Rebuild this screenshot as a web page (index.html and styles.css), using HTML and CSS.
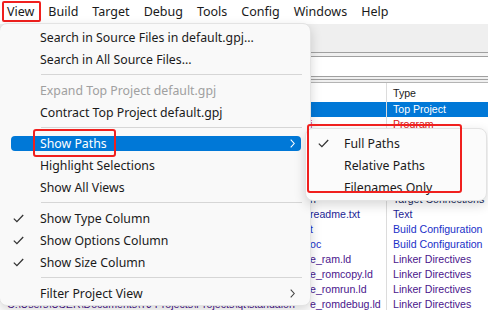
FILE: index.html
```html
<!DOCTYPE html>
<html lang="en">
<head>
    <meta charset="UTF-8">
    <title>MULTI Project Manager - View menu</title>
    <link rel="stylesheet" href="styles.css">
</head>
<body>
    <div class="app">
        <nav class="menubar">
            <span class="menubar-item is-open">View</span>
            <span class="menubar-item">Build</span>
            <span class="menubar-item">Target</span>
            <span class="menubar-item">Debug</span>
            <span class="menubar-item">Tools</span>
            <span class="menubar-item">Config</span>
            <span class="menubar-item">Windows</span>
            <span class="menubar-item">Help</span>
        </nav>

        <div class="toolbar"></div>
        <div class="strip"></div>
        <div class="pathbar"></div>
        <div class="strip strip-double"></div>

        <div class="tree">
            <div class="tree-row tree-head">
                <span class="col-name"></span>
                <span class="col-type">Type</span>
            </div>
            <div class="tree-row selected">
                <span class="col-name">default.gpj</span>
                <span class="col-type">Top Project</span>
            </div>
            <div class="tree-row t-program">
                <span class="col-name"><span class="dir">C:\Users\USER\Documents\TJ Projects\Projects\qt\mult</span>i</span>
                <span class="col-type">Program</span>
            </div>
            <div class="tree-row t-program">
                <span class="col-name"><span class="dir">C:\Users\USER\Documents\TJ Projects\Projects\qt\</span>src</span>
                <span class="col-type">Program</span>
            </div>
            <div class="tree-row t-source">
                <span class="col-name"><span class="dir">C:\Users\USER\Documents\TJ Projects\Projects\qt\</span>main.c</span>
                <span class="col-type">C Source</span>
            </div>
            <div class="tree-row t-source">
                <span class="col-name"><span class="dir">C:\Users\USER\Documents\TJ Projects\Projects\qt\</span>init.c</span>
                <span class="col-type">C Source</span>
            </div>
            <div class="tree-row t-source">
                <span class="col-name"><span class="dir">C:\Users\USER\Documents\TJ Projects\Projects\qt\</span>util.c</span>
                <span class="col-type">C Source</span>
            </div>
            <div class="tree-row t-target">
                <span class="col-name"><span class="dir">C:\Users\USER\Documents\TJ Projects\Projects\qt\</span>n</span>
                <span class="col-type">Target Connections</span>
            </div>
            <div class="tree-row t-text">
                <span class="col-name"><span class="dir">C:\Users\USER\Documents\TJ Projects\Projects\qt\</span>readme.txt</span>
                <span class="col-type">Text</span>
            </div>
            <div class="tree-row t-build">
                <span class="col-name"><span class="dir">C:\Users\USER\Documents\TJ Projects\Projects\qt\</span>t</span>
                <span class="col-type">Build Configuration</span>
            </div>
            <div class="tree-row t-build">
                <span class="col-name"><span class="dir">C:\Users\USER\Documents\TJ Projects\Projects\qt\</span>oc</span>
                <span class="col-type">Build Configuration</span>
            </div>
            <div class="tree-row t-linker">
                <span class="col-name"><span class="dir">C:\Users\USER\Documents\TJ Projects\Projects\qt\standalon</span>e_ram.ld</span>
                <span class="col-type">Linker Directives</span>
            </div>
            <div class="tree-row t-linker">
                <span class="col-name"><span class="dir">C:\Users\USER\Documents\TJ Projects\Projects\qt\standalon</span>e_romcopy.ld</span>
                <span class="col-type">Linker Directives</span>
            </div>
            <div class="tree-row t-linker">
                <span class="col-name"><span class="dir">C:\Users\USER\Documents\TJ Projects\Projects\qt\standalon</span>e_romrun.ld</span>
                <span class="col-type">Linker Directives</span>
            </div>
            <div class="tree-row t-linker">
                <span class="col-name"><span class="dir">C:\Users\USER\Documents\TJ Projects\Projects\qt\standalon</span>e_romdebug.ld</span>
                <span class="col-type">Linker Directives</span>
            </div>
        </div>

        <!-- open View menu -->
        <div class="menu">
            <div class="menu-item">Search in Source Files in default.gpj...</div>
            <div class="menu-item">Search in All Source Files...</div>
            <div class="menu-sep"></div>
            <div class="menu-item disabled">Expand Top Project default.gpj</div>
            <div class="menu-item">Contract Top Project default.gpj</div>
            <div class="menu-sep"></div>
            <div class="menu-item active has-sub">
                <span class="menu-label marked">Show Paths</span>
                <svg class="chevron" width="5" height="9" viewBox="0 0 5 9"><path d="M0.7 0.7 L4.2 4.5 L0.7 8.3" fill="none" stroke="currentColor" stroke-width="1.1"/></svg>
            </div>
            <div class="menu-item">Highlight Selections</div>
            <div class="menu-item">Show All Views</div>
            <div class="menu-sep"></div>
            <div class="menu-item checked">
                <svg class="check" width="11" height="9" viewBox="0 0 11 9"><path d="M0.8 4.6 L3.9 7.6 L10.2 1" fill="none" stroke="currentColor" stroke-width="1.3"/></svg>
                Show Type Column
            </div>
            <div class="menu-item checked">
                <svg class="check" width="11" height="9" viewBox="0 0 11 9"><path d="M0.8 4.6 L3.9 7.6 L10.2 1" fill="none" stroke="currentColor" stroke-width="1.3"/></svg>
                Show Options Column
            </div>
            <div class="menu-item checked">
                <svg class="check" width="11" height="9" viewBox="0 0 11 9"><path d="M0.8 4.6 L3.9 7.6 L10.2 1" fill="none" stroke="currentColor" stroke-width="1.3"/></svg>
                Show Size Column
            </div>
            <div class="menu-sep"></div>
            <div class="menu-item has-sub">
                <span class="menu-label">Filter Project View</span>
                <svg class="chevron" width="5" height="9" viewBox="0 0 5 9"><path d="M0.7 0.7 L4.2 4.5 L0.7 8.3" fill="none" stroke="currentColor" stroke-width="1.1"/></svg>
            </div>
        </div>

        <!-- Show Paths submenu -->
        <div class="submenu">
            <div class="menu-item checked">
                <svg class="check" width="11" height="9" viewBox="0 0 11 9"><path d="M0.8 4.6 L3.9 7.6 L10.2 1" fill="none" stroke="currentColor" stroke-width="1.3"/></svg>
                Full Paths
            </div>
            <div class="menu-item">Relative Paths</div>
            <div class="menu-item">Filenames Only</div>
        </div>
        <div class="submenu-mark"></div>
    </div>
</body>
</html>
```

FILE: styles.css
```css
:root {
    --accent: #0078d7;
    --mark: #f0201e;
    --rule: #a0a0a0;
    --menu-bg: #f9f9f9;
    --text: #1a1a1a;
}

body {
    margin: 0;
    font-family: 'Noto Sans', 'Noto Sans CJK SC', sans-serif;
    font-size: 12.3px;
    color: var(--text);
    background: #ffffff;
}

.app {
    position: relative;
    width: 488px;
    height: 310px;
    overflow: hidden;
}

/* menu bar */
.menubar {
    display: flex;
    height: 24px;
    align-items: center;
    background: #ffffff;
    font-size: 12.5px;
}

.menubar-item {
    position: relative;
    padding: 0 7px;
    line-height: 24px;
    white-space: nowrap;
}

.menubar-item.is-open::after {
    content: "";
    position: absolute;
    left: 2px;
    right: 0;
    top: 1px;
    bottom: 2px;
    border: 2px solid var(--mark);
    border-radius: 2px;
}

/* background window */
.toolbar {
    height: 28px;
    background: #efefef;
    border-bottom: 1px solid var(--rule);
}

.strip {
    height: 3px;
    background: #f0f0f0;
    border-bottom: 1px solid var(--rule);
}

.strip-double {
    height: 5px;
    background: linear-gradient(#f0f0f0 0 2px, var(--rule) 2px 3px, #f0f0f0 3px);
    border-bottom: 1px solid #b4b4b4;
}

.pathbar {
    height: 19px;
    background: #ffffff;
    border-bottom: 1px solid var(--rule);
}

.tree {
    display: flex;
    flex-direction: column;
    font-family: 'Liberation Sans', Arial, sans-serif;
    font-size: 10.6px;
}

.tree-row {
    display: flex;
    height: 15px;
    line-height: 15px;
    white-space: nowrap;
}

.tree-head {
    height: 19px;
    line-height: 20px;
}

.col-name {
    width: 379px;
    padding-left: 7px;
    overflow: hidden;
}

.col-type {
    flex: 1;
    padding-left: 6px;
    border-left: 1px solid #dcdcdc;
    overflow: hidden;
}

.dir {
    display: inline-block;
    width: 303px;
    overflow: hidden;
    vertical-align: top;
}

.selected {
    background: var(--accent);
    color: #ffffff;
}

.t-program { color: #dc1414; }
.t-source { color: #1a1a1a; }
.t-target { color: #14285a; }
.t-text { color: #1e1e96; }
.t-build { color: #1a30c8; }
.t-linker { color: #4a168c; }

/* popup menus */
.menu,
.submenu {
    position: absolute;
    background: var(--menu-bg);
    border: 1px solid #e3e3e3;
    border-radius: 8px;
    box-shadow: 0 4px 12px rgba(0, 0, 0, 0.16);
}

.menu {
    left: -1px;
    top: 23px;
    width: 310px;
    padding: 2px 0 1px;
}

.submenu {
    left: 305px;
    top: 128px;
    width: 180px;
    padding: 3px 0 2px;
    background: #fbfbfb;
}

.menu-item {
    position: relative;
    display: flex;
    align-items: center;
    height: 22px;
    padding-left: 40px;
    white-space: nowrap;
}

.submenu .menu-item {
    padding-left: 38px;
}

.menu-item.disabled {
    color: #a0a0a0;
}

.menu-item.active {
    color: #ffffff;
}

.menu-item.active::before {
    content: "";
    position: absolute;
    left: 11px;
    right: 9px;
    top: 4px;
    bottom: 3px;
    background: var(--accent);
    border-radius: 4px;
}

.menu-label {
    position: relative;
}

.menu-label.marked::after {
    content: "";
    position: absolute;
    left: -7px;
    right: -9px;
    top: -6px;
    bottom: -5px;
    border: 2px solid var(--mark);
    border-radius: 3px;
}

.chevron {
    position: absolute;
    right: 15px;
    top: 7px;
    color: #444;
}

.menu-item.active .chevron {
    color: #ffffff;
}

.check {
    position: absolute;
    left: 13px;
    top: 7px;
    color: #333;
}

.submenu .check {
    left: 12px;
}

.menu-sep {
    height: 1px;
    margin: 4px 8px 4px 41px;
    background: #d6d6d6;
}

.submenu-mark {
    position: absolute;
    left: 307px;
    top: 124px;
    width: 151px;
    height: 65px;
    border: 2px solid var(--mark);
    border-radius: 3px;
}
```
